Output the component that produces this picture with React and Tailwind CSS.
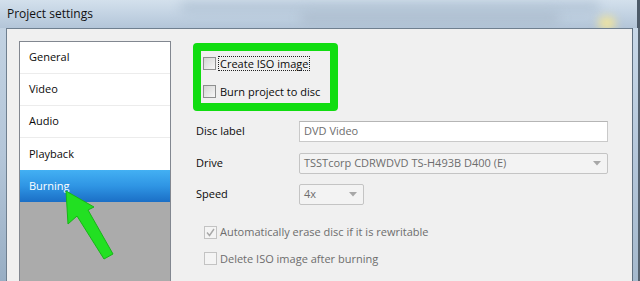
import React from "react";

const font = { fontFamily: '"Open Sans", "Noto Sans", sans-serif' };

function Check({ checked, disabled }) {
  return (
    <div
      className={
        "w-[13px] h-[13px] shrink-0 border flex items-center justify-center " +
        (disabled
          ? "border-[#c3c3c3] bg-[#f4f4f4]"
          : "border-[#8e8f8f] bg-gradient-to-br from-[#d4d4d4] to-[#f7f7f7]")
      }
    >
      {checked && (
        <svg width="9" height="9" viewBox="0 0 9 9">
          <path d="M1 4.5 L3.5 7.5 L8 1" fill="none" stroke="#a8a8a8" strokeWidth="1.4" />
        </svg>
      )}
    </div>
  );
}

function NavItem({ label, selected }) {
  if (selected) {
    return (
      <div className="h-[32px] flex items-center pl-[9px] text-white bg-gradient-to-b from-[#43b0f3] via-[#2f95e4] to-[#1b6fc6]">
        {label}
      </div>
    );
  }
  return (
    <div className="h-[32px] flex items-center pl-[9px] text-[#0a0a0a] border-b border-[#ececec]">
      {label}
    </div>
  );
}

export default function App() {
  return (
    <div
      className="relative w-[640px] h-[281px] overflow-hidden flex flex-col text-[11px] bg-[#b9cadb]"
      style={font}
    >
      {/* title bar */}
      <div className="relative h-[28px] shrink-0 bg-gradient-to-b from-[#d3e0ec] via-[#c3d3e3] to-[#b3c5d8] flex items-center pl-[7px] overflow-hidden">
        <div className="absolute left-[180px] top-[2px] w-[420px] h-[10px] rounded-full bg-[#9fb3c8] blur-[6px] opacity-60" />
        <div className="absolute left-[300px] top-[12px] w-[260px] h-[12px] rounded-full bg-[#a8b8c9] blur-[6px] opacity-70" />
        <div className="absolute left-[598px] top-[16px] w-[18px] h-[14px] rounded-full bg-[#eee3a0] blur-[4px]" />
        <div className="absolute right-0 top-0 w-[3px] h-[28px] bg-[#4d5b69]" />
        <span className="relative text-[12px] text-[#111]">Project settings</span>
      </div>

      {/* body */}
      <div className="flex flex-1 min-h-0">
        <div className="w-[6px] shrink-0 bg-gradient-to-b from-[#c2d2e2] via-[#b4c6d9] to-[#98aec4]" />
        <div className="flex-1 border-l border-t border-[#6f7f8f] bg-[#f0f0f0] flex pt-[12px] pl-[12px] min-w-0">
          {/* nav list */}
          <div className="w-[152px] shrink-0 border border-b-0 border-[#828790] bg-white flex flex-col">
            <NavItem label="General" />
            <NavItem label="Video" />
            <NavItem label="Audio" />
            <div className="h-[32px] flex items-center pl-[9px] text-[#0a0a0a]">Playback</div>
            <NavItem label="Burning" selected />
            <div className="flex-1 bg-[#ababab]" />
          </div>

          {/* settings */}
          <div className="flex flex-col pl-[22px] pt-[2px] text-[#0a0a0a]">
            <div className="w-[145px] h-[68px] border-[8px] border-[#10dd10] rounded-[4px] flex flex-col pl-[2px] pt-[5px] gap-[14px]">
              <div className="flex items-center gap-[2px]">
                <Check />
                <span className="border border-dotted border-[#222] px-[1px] leading-[13px]">Create ISO image</span>
              </div>
              <div className="flex items-center gap-[4px]">
                <Check />
                <span className="leading-[13px]">Burn project to disc</span>
              </div>
            </div>

            <div className="flex items-center mt-[10px] h-[20px]">
              <span className="w-[106px] pl-[3px]">Disc label</span>
              <div className="w-[309px] h-[21px] border border-[#c9c9c9] border-t-[#b5b5b5] bg-white flex items-center pl-[4px] text-[#6d6d6d]">
                DVD Video
              </div>
            </div>

            <div className="flex items-center mt-[12px] h-[20px]">
              <span className="w-[106px] pl-[3px]">Drive</span>
              <div className="w-[309px] h-[21px] border border-[#c4c4c4] rounded-[2px] bg-[#f3f3f3] flex items-center justify-between pl-[4px] pr-[6px] text-[#6d6d6d]">
                <span>TSSTcorp CDRWDVD TS-H493B D400 (E)</span>
                <svg width="8" height="5" viewBox="0 0 8 5">
                  <path d="M0 0 L8 0 L4 4.5 Z" fill="#a7a7a7" />
                </svg>
              </div>
            </div>

            <div className="flex items-center mt-[11px] h-[21px]">
              <span className="w-[106px] pl-[3px]">Speed</span>
              <div className="w-[65px] h-[21px] border border-[#c4c4c4] rounded-[2px] bg-[#f3f3f3] flex items-center justify-between pl-[4px] pr-[6px] text-[#6d6d6d]">
                <span>4x</span>
                <svg width="8" height="5" viewBox="0 0 8 5">
                  <path d="M0 0 L8 0 L4 4.5 Z" fill="#a7a7a7" />
                </svg>
              </div>
            </div>

            <div className="flex items-center gap-[3px] mt-[19px] pl-[11px] text-[#6d6d6d]">
              <Check checked disabled />
              <span>Automatically erase disc if it is rewritable</span>
            </div>
            <div className="flex items-center gap-[3px] mt-[10px] pl-[11px] text-[#6d6d6d]">
              <Check disabled />
              <span>Delete ISO image after burning</span>
            </div>
          </div>
        </div>
        <div className="w-[8px] shrink-0 border-l border-[#5f6f7f] bg-gradient-to-b from-[#c8d8e8] via-[#b5c7da] to-[#a5b9cd] border-r-2 border-r-[#55626f]" />
      </div>

      {/* annotation arrow */}
      <svg className="absolute left-0 top-0 pointer-events-none" width="640" height="281">
        <polygon
          points="66,191 68,224 77,216 104,259 113,254 88,210 94,207"
          fill="#22e022"
          stroke="#17b517"
          strokeWidth="1"
          strokeLinejoin="round"
        />
      </svg>
    </div>
  );
}
